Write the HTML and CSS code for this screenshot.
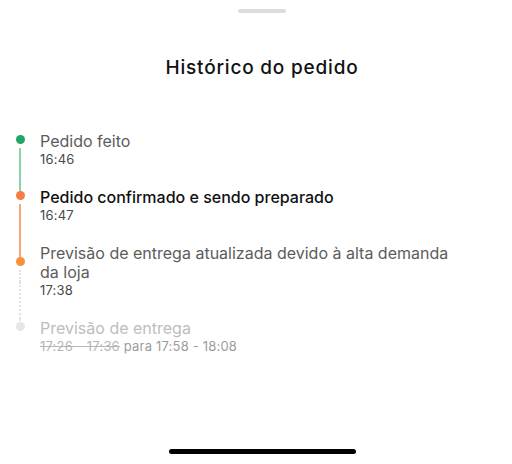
FILE: index.html
```html
<!DOCTYPE html>
<html lang="pt-BR">

<head>
    <meta charset="UTF-8">
    <meta name="viewport" content="width=device-width, initial-scale=1.0">
    <title>Histórico do pedido</title>
    <link rel="stylesheet" href="styles.css">
</head>

<body>
    <div class="sheet">
        <div class="handle"></div>
        <h1 class="title">Histórico do pedido</h1>

        <ul class="timeline">
            <li class="step step-done">
                <div class="marker">
                    <span class="seg-in"></span>
                    <span class="dot"></span>
                    <span class="seg-out"></span>
                </div>
                <p class="label">Pedido feito</p>
                <span class="seg"></span>
                <p class="time">16:46</p>
            </li>
            <li class="step step-current">
                <div class="marker">
                    <span class="seg-in"></span>
                    <span class="dot"></span>
                    <span class="seg-out"></span>
                </div>
                <p class="label">Pedido confirmado e sendo preparado</p>
                <span class="seg"></span>
                <p class="time">16:47</p>
            </li>
            <li class="step step-update">
                <div class="marker">
                    <span class="seg-in"></span>
                    <span class="dot"></span>
                    <span class="seg-out"></span>
                </div>
                <p class="label">Previsão de entrega atualizada devido à alta demanda da loja</p>
                <span class="seg"></span>
                <p class="time">17:38</p>
            </li>
            <li class="step step-next">
                <div class="marker">
                    <span class="seg-in"></span>
                    <span class="dot"></span>
                    <span class="seg-out"></span>
                </div>
                <p class="label">Previsão de entrega</p>
                <span class="seg"></span>
                <p class="time"><s>17:26 - 17:36</s> para 17:58 - 18:08</p>
            </li>
        </ul>

        <div class="home-bar"></div>
    </div>
</body>

</html>
```

FILE: styles.css
```css
body {
    margin: 0;
    background-color: #fff;
    font-family: 'Inter', 'Roboto', sans-serif;
    color: #3e3e3e;
}

.sheet {
    height: 464px;
    padding-left: 12px;
    box-sizing: border-box;
    display: flex;
    flex-direction: column;
}

.handle {
    width: 48px;
    height: 4px;
    margin: 9px auto 0;
    border-radius: 2px;
    background-color: #dcdcdc;
}

.title {
    margin: 43px 0 0;
    font-size: 19px;
    font-weight: 500;
    line-height: 24px;
    letter-spacing: 0.8px;
    text-align: center;
    color: #111;
}

.timeline {
    list-style: none;
    margin: 52px 0 0;
    padding: 0 50px 0 2px;
}

/* dot + label on the first row, line + time on the second */
.step {
    display: grid;
    grid-template-columns: 12px 1fr;
    column-gap: 14px;
}

.marker {
    display: flex;
    flex-direction: column;
    align-items: center;
}

.seg-in,
.seg-out,
.seg {
    width: 2px;
    flex: 1;
    justify-self: center;
}

.dot {
    width: 9px;
    height: 9px;
    margin-bottom: 4px;
    border-radius: 50%;
    flex-shrink: 0;
}

.step-done .dot { background-color: #1ea764; }
.step-done .seg-out,
.step-done .seg,
.step-current .seg-in { background-color: #8ad3a8; }

.step-current .dot { background-color: #f87b44; }
.step-current .seg-out,
.step-current .seg,
.step-update .seg-in { background-color: #fca27c; }

.step-update .dot { background-color: #f7913d; }
.step-update .seg-out,
.step-update .seg,
.step-next .seg-in {
    width: 0;
    border-left: 2px dotted #e2e2e2;
}

.step-next .dot { background-color: #e6e6e6; }

.label {
    margin: 0;
    font-size: 16px;
    line-height: 19px;
    color: #5c5c5c;
}

.time {
    margin: 0;
    padding-bottom: 20px;
    font-size: 13px;
    line-height: 17px;
    letter-spacing: 0.2px;
    color: #4a4a4a;
}

.step-current .label {
    font-weight: 500;
    color: #111;
}

.step-next .label {
    color: #bdbdbd;
}

.step-next .time {
    color: #9c9c9c;
}

.step-next s {
    color: #b5b5b5;
}

.home-bar {
    width: 187px;
    height: 5px;
    margin: auto auto 10px;
    border-radius: 3px;
    background-color: #000;
}
```
